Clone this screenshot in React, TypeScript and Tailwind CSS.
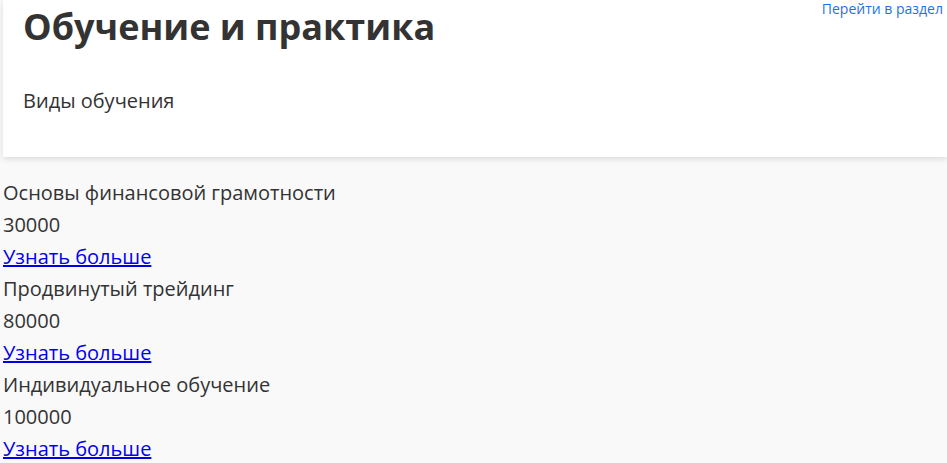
const courses = [
  { title: "Основы финансовой грамотности", price: "30000" },
  { title: "Продвинутый трейдинг", price: "80000" },
  { title: "Индивидуальное обучение", price: "100000" },
];

export default function App() {
  return (
    <div className="min-h-screen overflow-hidden bg-[#f9f9f9] pl-[3px] text-[20px] leading-[32px] text-[#333] font-['Open_Sans',sans-serif]">
      {/* Section header card */}
      <div className="relative w-full bg-white px-5 pt-[3px] pb-[40px] shadow-[0_2px_6px_rgba(0,0,0,0.12)]">
        <a className="absolute top-0 right-[4px] text-[14px] leading-[18px] text-[#1a73e8]" href="#">
          Перейти в раздел
        </a>
        <h1 className="text-[36px] leading-[48px] font-bold text-[#333]">Обучение и практика</h1>
        <p className="mt-[34px]">Виды обучения</p>
      </div>

      {/* Courses list */}
      <div className="pt-5">
        {courses.map((c) => (
          <div key={c.title}>
            <div>{c.title}</div>
            <div>{c.price}</div>
            <a className="text-[#0000ee] underline" href="#">
              Узнать больше
            </a>
          </div>
        ))}
      </div>
    </div>
  );
}
